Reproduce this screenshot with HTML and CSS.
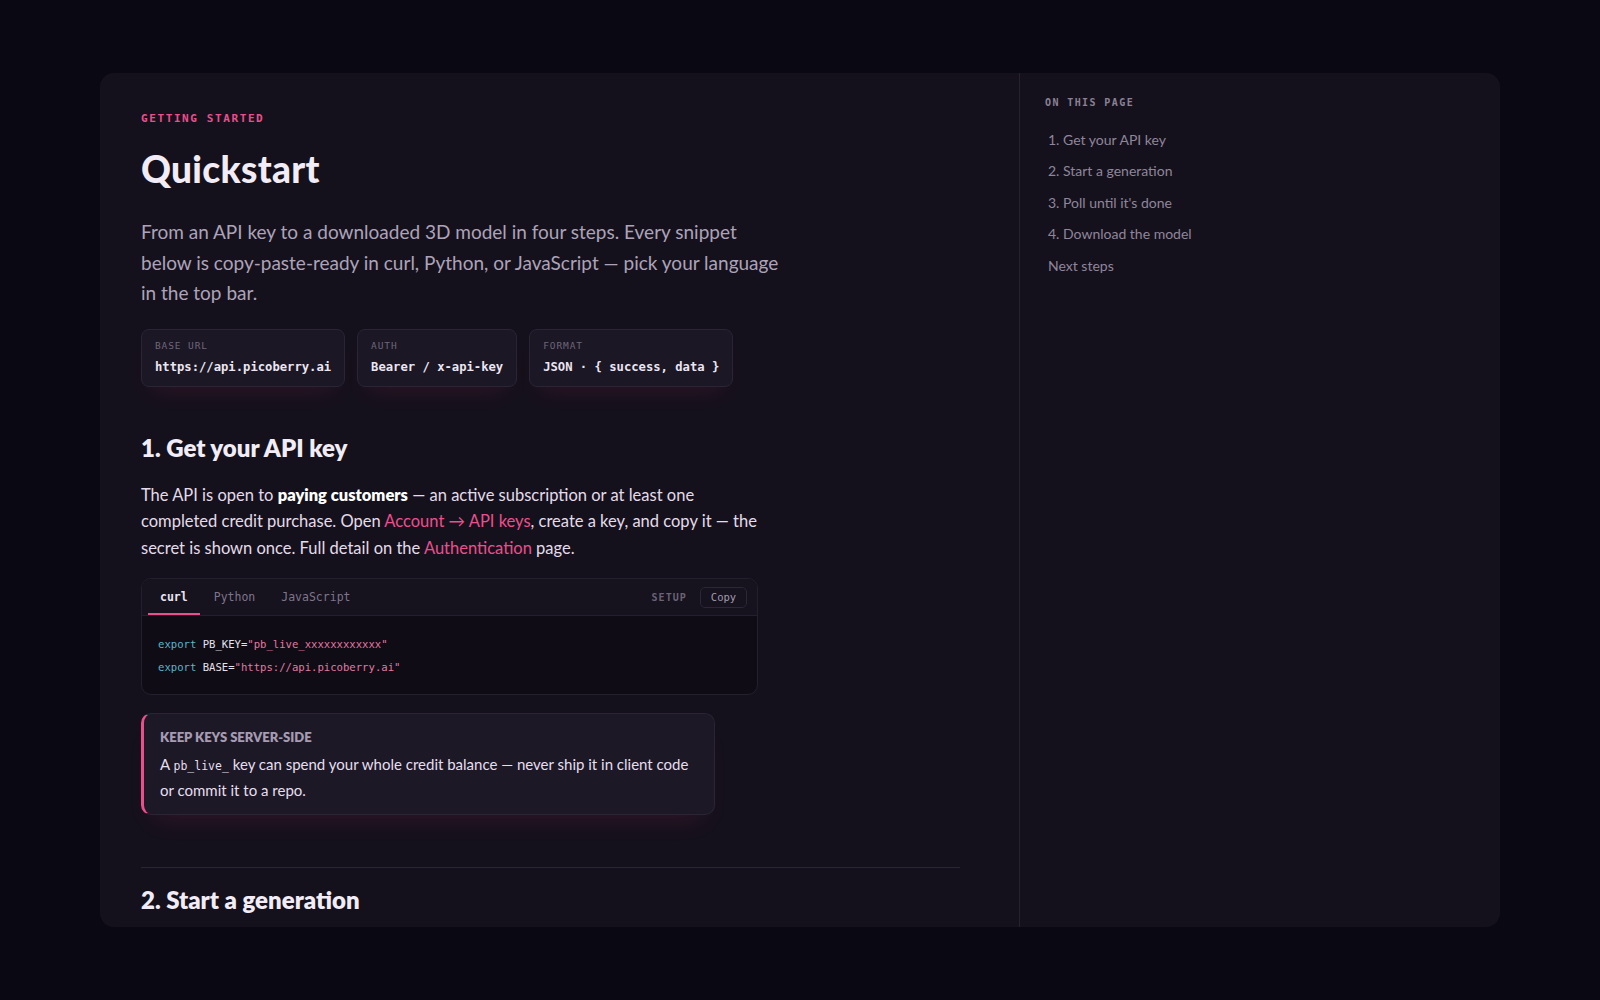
FILE: index.html
```html
<!DOCTYPE html>
<html lang="en">
<head>
<meta charset="utf-8">
<title>Quickstart</title>
<link rel="stylesheet" href="styles.css">
</head>
<body>
<div class="card">
  <main class="main">
    <div class="eyebrow">GETTING STARTED</div>
    <h1 class="title">Quickstart</h1>
    <p class="lead">From an API key to a downloaded 3D model in four steps. Every snippet below is copy-paste-ready in curl, Python, or JavaScript — pick your language in the top bar.</p>
    <div class="chips">
      <div class="chip"><div class="chip-label">BASE URL</div><div class="chip-value">https://api.picoberry.ai</div></div>
      <div class="chip"><div class="chip-label">AUTH</div><div class="chip-value">Bearer / x-api-key</div></div>
      <div class="chip"><div class="chip-label">FORMAT</div><div class="chip-value">JSON · { success, data }</div></div>
    </div>

    <h2 class="h2 first">1. Get your API key</h2>
    <p class="para">The API is open to <strong>paying customers</strong> — an active subscription or at least one completed credit purchase. Open <a class="link" href="#">Account → API keys</a>, create a key, and copy it — the secret is shown once. Full detail on the <a class="link" href="#">Authentication</a> page.</p>

    <div class="code">
      <div class="code-bar">
        <div class="tabs">
          <span class="tab active">curl</span>
          <span class="tab">Python</span>
          <span class="tab">JavaScript</span>
        </div>
        <div class="code-tools">
          <span class="code-label">SETUP</span>
          <button class="copy">Copy</button>
        </div>
      </div>
      <pre class="code-body"><span class="kw">export</span> PB_KEY=<span class="str">"pb_live_xxxxxxxxxxxx"</span>
<span class="kw">export</span> BASE=<span class="str">"https://api.picoberry.ai"</span></pre>
    </div>

    <div class="callout">
      <div class="callout-title">KEEP KEYS SERVER-SIDE</div>
      <p class="callout-body">A <code class="inline">pb_live_</code> key can spend your whole credit balance — never ship it in client code or commit it to a repo.</p>
    </div>

    <hr class="rule">
    <h2 class="h2">2. Start a generation</h2>
  </main>
  <aside class="side">
    <div class="side-title">ON THIS PAGE</div>
    <nav class="toc">
      <a href="#">1. Get your API key</a>
      <a href="#">2. Start a generation</a>
      <a href="#">3. Poll until it's done</a>
      <a href="#">4. Download the model</a>
      <a href="#">Next steps</a>
    </nav>
  </aside>
</div>
</body>
</html>
```

FILE: styles.css
```css
* { box-sizing: border-box; }
html, body { margin: 0; padding: 0; }
body {
  background: #0a0813;
  font-family: "Lato", "Noto Sans", sans-serif;
  color: #e6dfee;
  height: 1000px;
  overflow: hidden;
}
.card {
  margin: 73px 100px 0;
  height: 854px;
  background: #15111c;
  border-radius: 14px;
  display: flex;
  overflow: hidden;
}
.main {
  width: 920px;
  flex: none;
  padding: 39px 60px 0 41px;
  border-right: 1px solid #262030;
}
.eyebrow {
  font-family: "DejaVu Sans Mono", monospace;
  font-size: 11px;
  line-height: 14px;
  letter-spacing: 1.6px;
  color: #ea4f8c;
  font-weight: 600;
}
.title {
  margin: 23px 0 0;
  font-size: 37px;
  line-height: 40px;
  font-weight: 900;
  color: #f1ecf6;
  letter-spacing: 0.3px;
}
.lead {
  margin: 28px 0 0;
  max-width: 640px;
  font-size: 19px;
  line-height: 30.5px;
  color: #ada3b9;
}
.chips {
  display: flex;
  gap: 12px;
  margin-top: 20px;
}
.chip {
  background: #1b1725;
  border: 1px solid #2a2435;
  border-radius: 8px;
  padding: 9px 13px 11px;
  box-shadow: 0 14px 22px -12px rgba(200, 50, 110, 0.16);
}
.chip-label {
  font-family: "DejaVu Sans Mono", monospace;
  font-size: 9.5px;
  line-height: 14px;
  letter-spacing: 0.9px;
  color: #6f6679;
}
.chip-value {
  margin-top: 6px;
  font-family: "DejaVu Sans Mono", monospace;
  font-size: 12.2px;
  line-height: 16px;
  font-weight: 700;
  color: #ece6f2;
}
.h2 {
  margin: 0;
  font-size: 24px;
  line-height: 30px;
  font-weight: 800;
  color: #f1ecf6;
}
.h2.first { margin-top: 46px; }
.para {
  margin: 19px 0 0;
  max-width: 620px;
  font-size: 16.5px;
  line-height: 26.5px;
  color: #e4dcea;
}
.para strong { color: #fff; font-weight: 800; }
.link { color: #ec4f8e; text-decoration: none; }
.code {
  margin-top: 17px;
  width: 617px;
  border: 1px solid #241f2e;
  border-radius: 10px;
  background: #0f0c15;
  overflow: hidden;
}
.code-bar {
  display: flex;
  justify-content: space-between;
  align-items: center;
  height: 37px;
  padding: 0 10px 0 6px;
  background: #16121e;
  border-bottom: 1px solid #241f2e;
}
.tabs { display: flex; gap: 2px; align-self: stretch; }
.tab {
  font-family: "DejaVu Sans Mono", monospace;
  font-size: 11.5px;
  color: #7e758a;
  padding: 0 12px;
  display: flex;
  align-items: center;
  border-bottom: 2px solid transparent;
  padding-top: 2px;
}
.tab.active {
  color: #ece6f2;
  font-weight: 700;
  border-bottom-color: #ea4f8c;
}
.code-tools { display: flex; align-items: center; gap: 13px; }
.code-label {
  font-family: "DejaVu Sans Mono", monospace;
  font-size: 10px;
  letter-spacing: 1.1px;
  color: #6b6276;
  font-weight: 600;
}
.copy {
  font-family: "DejaVu Sans Mono", monospace;
  font-size: 10.5px;
  color: #a29aad;
  background: transparent;
  border: 1px solid #2c2637;
  border-radius: 5px;
  height: 21px;
  width: 47px;
  padding: 0;
}
.code-body {
  margin: 0;
  padding: 17px 16px 15px;
  font-family: "DejaVu Sans Mono", monospace;
  font-size: 10.6px;
  line-height: 23px;
  color: #e7e0ee;
}
.kw { color: #58b6c8; }
.str { color: #e27aa2; }
.callout {
  margin-top: 18px;
  width: 574px;
  background: #1c1826;
  border: 1px solid #2a2435;
  border-left: 3px solid #ea4f8c;
  border-radius: 10px;
  padding: 14px 18px 11px 16px;
  box-shadow: 0 16px 24px -14px rgba(200, 50, 110, 0.18);
}
.callout-title {
  font-size: 13px;
  line-height: 18px;
  font-weight: 800;
  color: #a69cb2;
}
.callout-body {
  margin: 6px 0 0;
  font-size: 15px;
  line-height: 25.5px;
  color: #e6dfee;
}
.inline {
  font-family: "DejaVu Sans Mono", monospace;
  font-size: 11.5px;
  line-height: 1;
}
.rule {
  margin: 52px 0 17px;
  border: 0;
  border-top: 1px solid #2a2435;
  width: 819px;
}
.side {
  flex: 1;
  padding: 23px 24px 0 25px;
}
.side-title {
  font-family: "DejaVu Sans Mono", monospace;
  font-size: 10px;
  line-height: 14px;
  letter-spacing: 1.4px;
  color: #8a8195;
  font-weight: 700;
}
.toc {
  margin-top: 14px;
  display: flex;
  flex-direction: column;
}
.toc a {
  color: #8f869b;
  text-decoration: none;
  font-size: 14px;
  line-height: 19.4px;
  padding: 6px 3px;
}
```
